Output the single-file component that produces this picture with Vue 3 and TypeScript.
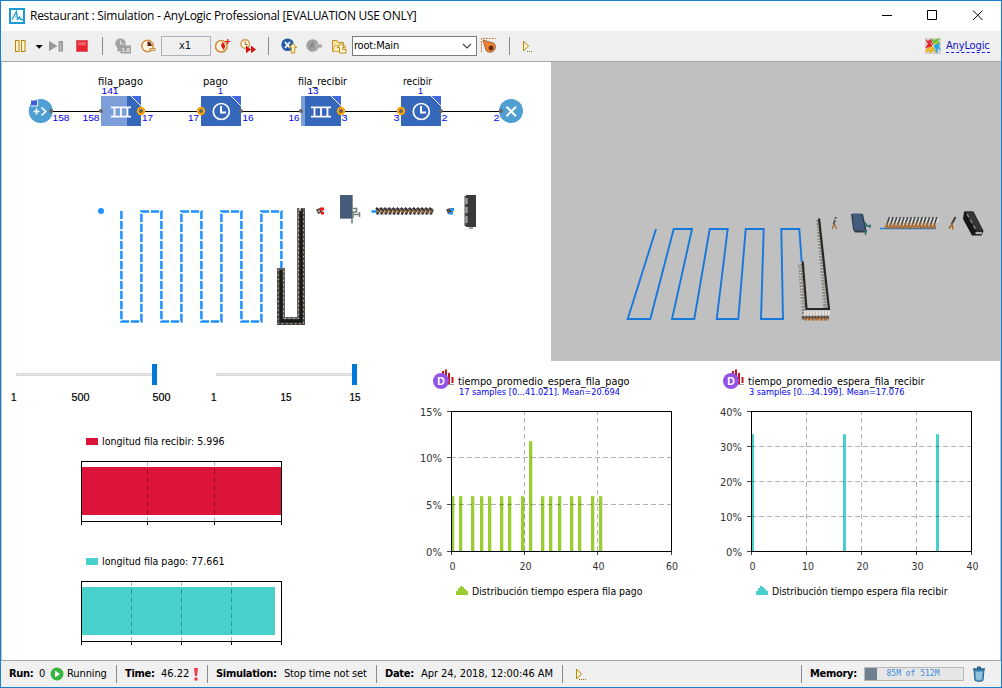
<script setup lang="ts">
interface Block { x: number; label: string; lx: number; lw: number; count: string; cx: number; cw: number; kind: 'queue' | 'delay'; fill: number }
interface Txt { x: number; y: number; w: number; t: string }

const blocks: Block[] = [
  { x: 101, label: 'fila_pago', lx: 98, lw: 45, count: '141', cx: 101.5, cw: 17, kind: 'queue', fill: 26 },
  { x: 201, label: 'pago', lx: 203, lw: 25, count: '1', cx: 218, cw: 5, kind: 'delay', fill: 0 },
  { x: 301, label: 'fila_recibir', lx: 298, lw: 49, count: '13', cx: 307.5, cw: 11, kind: 'queue', fill: 4 },
  { x: 401, label: 'recibir', lx: 403, lw: 29, count: '1', cx: 418, cw: 5, kind: 'delay', fill: 0 },
]
const portCounts: Txt[] = [
  { x: 52.5, y: 121, w: 17, t: '158' }, { x: 82.5, y: 121, w: 17, t: '158' },
  { x: 142, y: 121, w: 11, t: '17' }, { x: 188, y: 121, w: 11, t: '17' },
  { x: 242.5, y: 121, w: 11, t: '16' }, { x: 288.5, y: 121, w: 11, t: '16' },
  { x: 341.5, y: 121, w: 6, t: '3' }, { x: 393.5, y: 121, w: 6, t: '3' },
  { x: 441.5, y: 121, w: 6, t: '2' }, { x: 493.5, y: 121, w: 6, t: '2' },
]
const sliders = [
  { x: 16, labels: [{ x: 11, w: 5.5, t: '1' }, { x: 71.5, w: 18, t: '500' }, { x: 152.5, w: 18, t: '500' }] },
  { x: 216, labels: [{ x: 211, w: 5.5, t: '1' }, { x: 280.5, w: 11, t: '15' }, { x: 349.5, w: 11, t: '15' }] },
]
const levels = [
  { y: 461, color: '#dc143c', end: 281, ticks: [148, 215], label: 'longitud fila recibir: 5.996', w: 122.500 },
  { y: 581, color: '#48d1cc', end: 275, ticks: [132, 182, 232], label: 'longitud fila pago: 77.661', w: 122.500 },
]
interface Chart {
  x: number; hx: number; color: string; title: string; tw: number; info: string; iw: number; legend: string; lw: number
  gx: number[]; gy: number[]; xl: Txt[]; yl: Txt[]; bars: { x: number; y: number; w: number }[]
}
const low = [459, 471, 480, 488, 500, 508, 521, 541, 549, 558, 570, 578, 591, 599]
const charts: Chart[] = [
  {
    x: 451, hx: 451, color: '#9acd32', title: 'tiempo_promedio_espera_fila_pago', tw: 171.500,
    info: '17 samples [0...41.021]. Mean=20.694', iw: 161, legend: 'Distribución tiempo espera fila pago', lw: 170.500,
    gx: [524, 597], gy: [457, 504],
    xl: [{ x: 449.5, y: 570, w: 6, t: '0' }, { x: 519.5, y: 570, w: 12, t: '20' }, { x: 592.5, y: 570, w: 12, t: '40' }, { x: 666, y: 570, w: 12, t: '60' }],
    yl: [{ x: 420, y: 416, w: 22, t: '15%' }, { x: 420, y: 462, w: 22, t: '10%' }, { x: 426, y: 509, w: 16, t: '5%' }, { x: 426, y: 556, w: 16, t: '0%' }],
    bars: [{ x: 452, y: 496, w: 2 }, ...low.map(x => ({ x, y: 496, w: 3 })), { x: 529, y: 441, w: 3 }],
  },
  {
    x: 751, hx: 741, color: '#48d1cc', title: 'tiempo_promedio_espera_fila_recibir', tw: 176.500,
    info: '3 samples [0...34.199]. Mean=17.076', iw: 155.500, legend: 'Distribución tiempo espera fila recibir', lw: 175.500,
    gx: [806, 861, 916], gy: [446, 481, 516],
    xl: [{ x: 749.5, y: 570, w: 6, t: '0' }, { x: 802, y: 570, w: 12, t: '10' }, { x: 856.5, y: 570, w: 12, t: '20' }, { x: 911.5, y: 570, w: 12, t: '30' }, { x: 966.5, y: 570, w: 12, t: '40' }],
    yl: [{ x: 720, y: 416, w: 22, t: '40%' }, { x: 720, y: 451, w: 22, t: '30%' }, { x: 720, y: 486, w: 22, t: '20%' }, { x: 720, y: 521, w: 22, t: '10%' }, { x: 726, y: 556, w: 16, t: '0%' }],
    bars: [{ x: 752, y: 434, w: 2 }, { x: 843, y: 434, w: 3 }, { x: 936, y: 434, w: 3 }],
  },
]
const waiting = Array.from({ length: 14 }, (_, i) => i)
</script>

<template>
  <div class="window">
    <header class="titlebar">
      <svg class="app-icon" width="16" height="16" viewBox="0 0 16 16">
        <rect x="1" y="1" width="14" height="14" fill="#fff" stroke="#1c9ad6" stroke-width="2" />
        <path d="M3 11.5L7.500 3.500L8.500 11.500L10.500 9L11.500 11.500H14" fill="none" stroke="#1c9ad6" stroke-width="1.3" />
        <path d="M4 9.500L8 8.500" stroke="#7cc4e8" />
      </svg>
      <span class="title">Restaurant : Simulation - AnyLogic Professional [EVALUATION USE ONLY]</span>
      <svg class="win-buttons" width="104" height="12" viewBox="0 0 104 12">
        <path d="M0 5.5H10M45.5 0.5H54.5V9.5H45.5ZM91 0.5L100.5 10M100.5 0.5L91 10" fill="none" stroke="#000" />
      </svg>
    </header>

    <nav class="toolbar">
      <svg class="i" viewBox="0 0 16 16"><g fill="#fff2c4" stroke="#b8860b"><rect x="3.500" y="2.500" width="3.500" height="11" /><rect x="9.500" y="2.500" width="3.500" height="11" /></g></svg>
      <svg class="arrow" viewBox="0 0 8 16"><path d="M.5 7H7.800L4.200 10.800Z" fill="#000" /></svg>
      <svg class="i step" viewBox="0 0 16 16"><path d="M1 3L9.500 8L1 13Z" fill="#999" /><rect x="10.500" y="3" width="4.500" height="10.500" fill="#999" /><rect x="12" y="5" width="1.200" height="7" fill="#c4c4c4" /></svg>
      <svg class="i stop" viewBox="0 0 16 16"><rect x="2.500" y="2.500" width="11" height="11" fill="#e8212e" stroke="#e0606a" /><rect x="4" y="4" width="8" height="3.500" fill="#ef5d66" /></svg>
      <i class="sep"></i>
      <svg class="i g12" viewBox="0 0 16 16"><circle cx="5.500" cy="5.500" r="5.200" fill="#a4a4a4" /><path d="M5.500 2.500V6H8.500" fill="none" stroke="#e6e6e6" /><rect x="2.500" y="9.500" width="4" height="4" fill="#a4a4a4" /><rect x="5.500" y="7.500" width="10.500" height="8" fill="#a0a0a0" /><text x="6.500" y="14" class="mini">1.0</text></svg>
      <svg class="i g9" viewBox="0 0 16 16"><circle cx="7.500" cy="8" r="5.700" fill="#fff6df" stroke="#cf8a3c" stroke-width="1.500" /><path d="M7.500 8V3.600A4.400 4.400 0 0 1 11.900 8Z" fill="#5a2418" /><rect x="10" y="10.500" width="5" height="2" fill="#f7e3b7" stroke="#b8803a" stroke-width=".8" /></svg>
      <span class="speed">x1</span>
      <svg class="i g4" viewBox="0 0 16 16"><circle cx="6.300" cy="8.300" r="5.800" fill="#fff6df" stroke="#cf8a3c" stroke-width="1.500" /><path d="M6 7.500L7.500 4A5 5 0 0 1 8.500 12Z" fill="#e41414" /><path d="M12.700 1V6M10.200 3.500H15.200" stroke="#d81414" stroke-width="1.200" /></svg>
      <svg class="i g9" viewBox="0 0 16 16"><circle cx="5.200" cy="6" r="4.300" fill="#fff6df" stroke="#cf9a4c" stroke-width="1.400" /><path d="M5.200 3.500V6.500H7.500" fill="none" stroke="#a06a2c" /><path d="M6 7.500L11 11.400L6 15.300ZM11 7.500L16 11.400L11 15.300Z" fill="#d8100c" /></svg>
      <i class="sep"></i>
      <svg class="i g12" viewBox="0 0 16 16"><circle cx="6.600" cy="6.800" r="6.300" fill="#235ba8" /><path d="M4 4L9 10M9 4L4 10" stroke="#fff" stroke-width="1.800" /><path d="M12 5.500L15.800 9.500H13.700V15H10.300V9.500H8.200Z" fill="#ffeeb8" stroke="#b8860b" stroke-width=".9" /></svg>
      <svg class="i g9" viewBox="0 0 16 16"><circle cx="6.600" cy="7.500" r="6.300" fill="#a2a2a2" /><path d="M4 10.500L6.500 4.500L9 10.500M5 8.500H8" fill="none" stroke="#888" stroke-width="1.500" /><path d="M8.500 8L12 4.500V6.500H16V9.800H12V11.800Z" fill="#a8a8a8" stroke="#c9c9c9" stroke-width=".5" /></svg>
      <svg class="i g9" viewBox="0 0 16 16"><path d="M1.500 13.500V2.500H6L7 4.500H12.500V13.500Z" fill="#fbe3a0" stroke="#c08f2c" /><path d="M3.500 7.500H14.500V13.500H2Z" fill="#fcebb6" stroke="#cf9f42" stroke-width=".7" /><path d="M10 5.500L13.600 9.500H11.700V11.500H15V15H8.500V9.500H6.400Z" fill="#fff6d4" stroke="#b8860b" stroke-width=".9" /></svg>
      <span class="combo">root:Main<svg width="10" height="6" viewBox="0 0 10 6"><path d="M1 1L5 5L9 1" fill="none" stroke="#444" stroke-width="1.100" /></svg></span>
      <svg class="i g4" viewBox="0 0 16 16"><path d="M.5 14V.5H15" fill="none" stroke="#d87a36" stroke-dasharray="2 1" /><path d="M2 2L13 5.200A5.300 5.300 0 1 1 5 12.500Z" fill="#f08232" stroke="#8f552c" stroke-width=".8" /><circle cx="10" cy="10" r="2.400" fill="#5b2b12" /></svg>
      <i class="sep"></i>
      <svg class="i g10" viewBox="0 0 16 16"><path d="M3.500 3L8.500 8L3.500 13Z" fill="#fff4cf" stroke="#b8860b" /><path d="M7 13.500H13" stroke="#8a6a14" stroke-dasharray="1 1" /></svg>
      <svg class="i brand" viewBox="0 0 16 16"><rect width="16" height="16" fill="#d2d3d0" /><path d="M0 1L3 3L6 1L8 7L7 9L0 10L3 6Z" fill="#df2530" /><path d="M6 0L9 2L15 0L13 3L15 5L9 8Z" fill="#78bd35" /><path d="M8 8L15 5L14 8L16 13L13 10L12 16L10 12Z" fill="#22a7e0" /><path d="M0 15L2 10L8 8L11 15L7 12L6 16L4 13Z" fill="#f3ae13" /><path d="M5 4L11 12M12 4L4 12" stroke="#fff" stroke-width=".8" opacity=".7" /></svg>
      <span class="link">AnyLogic</span>
    </nav>

    <main class="workspace">
      <section class="views">
        <svg class="view" width="549" height="299" viewBox="2 62 549 299">
          <path d="M41 111H511" stroke="#000" shape-rendering="crispEdges" />
          <circle cx="40.700" cy="111" r="12" fill="#4f9fd3" />
          <path d="M31 100.500H37.500V106H31Z" fill="#3c62df" /><path d="M31 106H37.700V100" fill="none" stroke="#fff" />
          <path d="M33.500 111.500H39.500M36.500 108.500V114.500M41.500 107.500L45.700 111.500L41.500 115.500" fill="none" stroke="#fff" stroke-width="1.700" />
          <circle cx="511" cy="111" r="12" fill="#4f9fd3" />
          <path d="M506.500 106.700L516 116.200M516 106.700L506.500 116.200" stroke="#fff" stroke-width="2" />
          <g v-for="b in blocks" :key="b.x">
            <rect :x="b.x" y="96" width="40" height="30" fill="#3568ba" />
            <rect :x="b.x" y="96" :width="b.fill" height="30" fill="#7c9fda" />
            <path :d="`M${b.x + 30} 96H${b.x + 40}V106Z`" fill="#4169e1" />
            <path :d="`M${b.x + 30} 96L${b.x + 40} 106`" stroke="#fff" />
            <path v-if="b.kind === 'queue'" :d="`M${b.x + 10} 107.300H${b.x + 30}M${b.x + 10} 116.700H${b.x + 30}M${b.x + 13.500} 107V117M${b.x + 20} 107V117M${b.x + 26.500} 107V117`" fill="none" stroke="#fff" stroke-width="1.800" />
            <g v-else fill="none" stroke="#fff"><circle :cx="b.x + 20.300" cy="111.500" r="8" stroke-width="1.700" /><path :d="`M${b.x + 20} 106V112.500H${b.x + 25}`" stroke-width="2" /></g>
            <text class="tahoma" :x="b.lx" y="85" :textLength="b.lw" lengthAdjust="spacingAndGlyphs">{{ b.label }}</text>
            <text class="num" :x="b.cx" y="94" :textLength="b.cw" lengthAdjust="spacingAndGlyphs">{{ b.count }}</text>
          </g>
          <g fill="none" stroke="#ffa500" stroke-width="2.600"><circle v-for="x in [141, 201, 341, 401]" :key="x" :cx="x" cy="111" r="2.900" /></g>
          <g fill="#666"><circle v-for="x in [51, 101, 141, 201, 241, 301, 341, 401, 441, 501]" :key="x" :cx="x" cy="111" r="2" /></g>
          <text v-for="p in portCounts" :key="p.x" class="num" :x="p.x" :y="p.y" :textLength="p.w" lengthAdjust="spacingAndGlyphs">{{ p.t }}</text>

          <circle cx="101" cy="211" r="3" fill="#1e90ff" />
          <path d="M121.400 211V321.500H141.400V211.500H161.400V321.500H181.400V211.500H201.400V321.500H221.400V211.500H241.400V321.500H261.400V211.500H281.400V269" fill="none" stroke="#1e90ff" stroke-width="2.500" stroke-dasharray="8.200 1.800" />
          <g fill="none">
            <path d="M281 268V321H301V208" stroke="#65625d" stroke-width="8" />
            <path d="M281 270V321H301V209" stroke="#1b1a19" stroke-width="3.400" />
            <path d="M278 270V324H304V211" stroke="#3d3a36" stroke-width="1.400" />
            <path d="M278.300 270V323.600H303.600V212M283.600 271V318.500H298.600V210" stroke="#dcdcdc" stroke-width="1" stroke-dasharray="1.200 3.200" />
            <path d="M277.500 272V324H304.500V215" stroke="#8b6b45" stroke-width=".7" stroke-dasharray="1 6" />
          </g>
          <path d="M300 208V211" stroke="#fff" stroke-width="1.300" />
          <path d="M316 209.500L320 208L323 212L318 214Z" fill="#5b4c42" /><path d="M320 207.500H324V210.500H320ZM321 212H324V214.500H321Z" fill="#e11" /><circle cx="319" cy="211" r="1" fill="#c9b39c" />
          <rect x="340" y="195" width="12" height="23" fill="#455b79" /><path d="M340 218.500H351.500M352.500 195V218" stroke="#8a8f96" />
          <path d="M353 208.500H356.500V212H353V218M352 218V223.500M354 214.500H359M359.500 212V217" fill="none" stroke="#6d827d" stroke-width="1.600" />
          <path d="M371.500 211.500H377" stroke="#1e90ff" stroke-width="2.500" />
          <g v-for="i in waiting" :key="i"><path :d="`M${376 + i * 4.1} 208L${379 + i * 4.1} 210.500L${377 + i * 4.1} 214.500`" fill="none" stroke="#333" stroke-width="2.400" /><path :d="`M${376 + i * 4.1} 211.500H${379 + i * 4.1}`" stroke="#a66c33" stroke-width="1.700" /><path :d="`M${379.500 + i * 4.1} 208V209.500M${379 + i * 4.1} 213V214.500`" stroke="#999" /></g>
          <path d="M446 209.500L450 208L453 212L448 214Z" fill="#5b4c42" /><path d="M450.500 208H454V211H450.500ZM449 212H453V214.500H449Z" fill="#1e90ff" />
          <rect x="466" y="195" width="10" height="32" fill="#393939" /><path d="M465.500 196V226" stroke="#4f4f4f" stroke-width="2" /><path d="M466.500 198V204M466.500 207V213M466.500 216V223" stroke="#a0a0a0" stroke-width="2.300" /><rect x="469" y="227" width="4" height="2" fill="#a0a0a0" />
        </svg>
        <svg class="view scene" width="449" height="299" viewBox="551 62 449 299">
          <path d="M656 229L627.700 319H650.300L673.700 229H692L672 319H694.300L709.700 229H727.700L716.700 319H738.300L745.700 229H763.700L761 319H783L781.300 229H799.300L801.700 262" fill="none" stroke="#1778dc" stroke-width="1.900" />
          <g fill="none">
            <path d="M800 264L804 315M801.500 318L829 317M818 220L825.500 310" stroke="#8d8a86" stroke-width="4" stroke-dasharray="2 1" />
            <path d="M799.700 264L802.500 310M816.500 222L823.500 305" stroke="#e5e2db" stroke-width="1" stroke-dasharray="1 3" />
            <path d="M802.700 261.500L806.500 309H829L819 218.500" stroke="#292725" stroke-width="2.200" />
            <path d="M804 313H830" stroke="#e4e0d8" stroke-width="4.500" stroke-dasharray="2 1" />
            <path d="M802.500 317.500H829" stroke="#463628" stroke-width="2.500" stroke-dasharray="2 1" />
            <path d="M804 319.300H829" stroke="#b46b29" stroke-width="2.200" stroke-dasharray="3 1" />
          </g>
          <g fill="none"><path d="M836 217L833.500 224.500" stroke="#555" stroke-width="2" /><path d="M832 229L834.500 224L836.500 229" stroke="#a4672e" stroke-width="1.200" /><circle cx="835.500" cy="219.500" r=".8" fill="#eee" /></g>
          <path d="M851 214L853 229.500L855 232.500H867L863 214Z" fill="#303c4c" /><path d="M852.500 213.500H861.500L865 231L854 230Z" fill="#435b7c" />
          <path d="M865 222.500L867.500 226M865.500 226H871M865.500 230V235M870 224.500V228" fill="none" stroke="#24766c" stroke-width="1.400" />
          <path d="M880 228.500H935" stroke="#1c83e3" stroke-width="1.600" />
          <g v-for="i in waiting" :key="i" fill="none"><path :d="`M${889.500 + i * 3.650} 217L${887 + i * 3.650} 224`" stroke="#444" stroke-width="1.500" /><path :d="`M${891 + i * 3.650} 218L${889.500 + i * 3.650} 223`" stroke="#f4f1ea" stroke-width=".9" /><path :d="`M${885 + i * 3.650} 228.500L${887 + i * 3.650} 224L${888.200 + i * 3.650} 229`" stroke="#a66426" stroke-width="1.400" /></g>
          <path d="M955.500 217L951.500 224.500" stroke="#44403c" stroke-width="2" fill="none" /><path d="M949 228.500L952 224L953 229.500" fill="none" stroke="#a66426" stroke-width="1.500" />
          <path d="M964 211.500H973.500L983.500 231L981.500 235.500H972L963 219Z" fill="#161616" /><path d="M965 211.500H973L983 230.500H976Z" fill="#353535" /><path d="M967 214L976 230" stroke="#808080" stroke-width="1.500" stroke-dasharray="4 2.500" /><path d="M975.500 233H982" stroke="#aaa" stroke-width="2.300" />
        </svg>
      </section>

      <section class="stats">
        <svg class="panel" width="409" height="299" viewBox="2 361 409 299">
          <g v-for="s in sliders" :key="s.x">
            <rect :x="s.x + .5" y="373.500" width="138" height="2" fill="#e7eaea" stroke="#d6d6d6" />
            <rect :x="s.x + 136" y="364" width="5" height="21" fill="#0078d7" />
            <text v-for="l in s.labels" :key="l.x" class="tick" :x="l.x" y="401" :textLength="l.w" lengthAdjust="spacingAndGlyphs">{{ l.t }}</text>
          </g>
          <g v-for="l in levels" :key="l.y" shape-rendering="crispEdges">
            <rect x="86" :y="l.y - 23" width="12" height="7" :fill="l.color" />
            <text class="tahoma" x="102" :y="l.y - 16" :textLength="l.w" lengthAdjust="spacingAndGlyphs">{{ l.label }}</text>
            <rect x="82" :y="l.y + 6" :width="l.end - 82" height="48" :fill="l.color" />
            <path v-for="t in l.ticks" :key="t" :d="`M${t - .5} ${l.y}V${l.y + 60}`" stroke="#000" stroke-opacity=".3" stroke-dasharray="5 3" />
            <rect x="81.500" :y="l.y + .5" width="200" height="60" fill="none" stroke="#000" />
            <path v-for="t in [82, ...l.ticks, 282]" :key="t" :d="`M${t - .5} ${l.y + 60}V${l.y + 64}`" stroke="#000" />
          </g>
        </svg>
        <svg v-for="c in charts" :key="c.x" class="panel" :width="c.x === 451 ? 295 : 294" height="299" :viewBox="`${c.x === 451 ? 411 : 706} 361 ${c.x === 451 ? 295 : 294} 299`">
          <path :d="`M${c.hx - 8} 383V371M${c.hx - 5} 383V369.500M${c.hx - 2} 384V373M${c.hx + 1.500} 383V377`" stroke="#c41414" stroke-width="2" />
          <path :d="`M${c.hx - 4} 384.500H${c.hx + 3}`" stroke="#999" />
          <circle :cx="c.hx - 10" cy="381" r="8" fill="#9453e6" />
          <text class="badge" :x="c.hx - 13.700" y="385">D</text>
          <text class="tahoma" :x="c.hx + 7" y="385" :textLength="c.tw" lengthAdjust="spacingAndGlyphs">{{ c.title }}</text>
          <text class="tahoma info" :x="c.hx + 8" y="395" :textLength="c.iw" lengthAdjust="spacingAndGlyphs">{{ c.info }}</text>
          <g v-for="b in c.bars" :key="b.x" :fill="c.color">
            <rect v-if="c.x === 451" :x="b.x + b.w" :y="b.y" width="1" :height="551 - b.y" opacity=".3" />
            <rect :x="b.x" :y="b.y" :width="b.w" height="1" opacity=".8" />
            <rect :x="b.x" :y="b.y + 1" :width="b.w" :height="550 - b.y" />
          </g>
          <g fill="none" stroke="#000" stroke-opacity=".3" stroke-dasharray="5 3">
            <path v-for="x in c.gx" :key="x" :d="`M${x + .5} 551V412`" />
            <path v-for="y in c.gy" :key="y" :d="`M${c.x} ${y + .5}H${c.x + 220}`" />
          </g>
          <g stroke="#444">
            <path v-for="x in [c.x, ...c.gx, c.x + 220]" :key="x" :d="`M${x + .5} 551V555`" />
            <path v-for="y in [411, ...c.gy, 551]" :key="y" :d="`M${c.x - 4} ${y + .5}H${c.x}`" />
          </g>
          <rect :x="c.x + .5" y="411.500" width="220" height="140" fill="none" stroke="#000" />
          <text v-for="l in [...c.xl, ...c.yl]" :key="`${l.x}-${l.y}`" class="tahoma axis" :x="l.x" :y="l.y" :textLength="l.w" lengthAdjust="spacingAndGlyphs">{{ l.t }}</text>
          <path :d="`M${c.x + 5} 595V591H${c.x + 7}V588H${c.x + 9}V586H${c.x + 11}V587H${c.x + 13}V589H${c.x + 15}V591H${c.x + 17}V595Z`" :fill="c.color" />
          <text class="tahoma" :x="c.x + 21" y="595" :textLength="c.lw" lengthAdjust="spacingAndGlyphs">{{ c.legend }}</text>
        </svg>
      </section>
    </main>

    <footer class="status">
      <b class="run">Run:</b><span class="run-no">0</span>
      <svg class="running" width="14" height="14" viewBox="0 0 14 14"><circle cx="7" cy="7" r="6.500" fill="#35b53b" /><path d="M5 3.500L10 7L5 10.500Z" fill="#fff" /></svg>
      <span class="running-label">Running</span><i class="sep"></i>
      <b class="time">Time:</b><span class="time-value">46.22</span>
      <svg class="bang" width="6" height="14" viewBox="0 0 6 14"><path d="M1 1H5L4 9H2Z" fill="#f0394c" /><circle cx="3" cy="12" r="1.700" fill="#f0394c" /></svg><i class="sep"></i>
      <b class="sim">Simulation:</b><span class="sim-value">Stop time not set</span><i class="sep"></i>
      <b class="date">Date:</b><span class="date-value">Apr 24, 2018, 12:00:46 AM</span><i class="sep"></i>
      <svg class="i g10" viewBox="0 0 16 16"><path d="M3.500 3L8.500 8L3.500 13Z" fill="#fff4cf" stroke="#b8860b" /><path d="M6 13.500H13" stroke="#8a6a14" stroke-dasharray="1 1" /></svg>
      <i class="sep push"></i>
      <b class="mem">Memory:</b>
      <div class="meter"><span>85M of 512M</span></div>
      <svg class="trash" width="14" height="16" viewBox="0 0 14 16"><path d="M2 4H12L11 14.500Q7 16.500 3 14.500Z" fill="#5a9fc6" stroke="#22658e" /><path d="M5 6V13.500M7 6V14M9 6V13.500" stroke="#c9e6f2" /><path d="M1 3.200H13M5 1.300H9" stroke="#28698f" stroke-width="1.800" /></svg>
    </footer>
  </div>
</template>

<style>
body { background: #fff; overflow: hidden; }
</style>
<style scoped>
.window { box-sizing: border-box; width: 1002px; height: 688px; border: 1px solid #1a7fd0; background: #fff; display: flex; flex-direction: column; color: #000; font: 11px/14px "DejaVu Sans Condensed", "DejaVu Sans", sans-serif; font-stretch: condensed; white-space: nowrap; }
svg { display: block; flex: none; }
.titlebar { height: 30px; flex: none; display: flex; align-items: center; padding: 0 16px 0 8px; }
.app-icon { margin-top: -1px; }
.title { margin: 0 0 0 5px; font: 12px/16px "Open Sans", "Noto Sans", sans-serif; letter-spacing: -.27px; }
.win-buttons { margin: -1px -1px 0 auto; }
.toolbar { box-sizing: border-box; height: 31px; flex: none; background: #efefef; border-bottom: 1px solid #a6a6a6; display: flex; align-items: center; padding: 0 11px; }
.i { width: 16px; height: 16px; flex: none; }
.arrow { width: 8px; height: 16px; margin-left: 7px; }
.step { margin-left: 5px; }
.stop { margin-left: 10px; }
.g4 { margin-left: 4px; }
.g9 { margin-left: 9px; }
.g10 { margin-left: 10px; }
.g12 { margin-left: 12px; }
.mini { font: bold 6px "Liberation Sans", sans-serif; fill: #f2f2f2; }
.sep { width: 1px; height: 18px; margin-left: 12px; background: #8b8b8b; flex: none; }
.speed { box-sizing: border-box; width: 50px; height: 20px; margin-left: 5px; padding-right: 2px; border: 1px solid #adb2b8; text-align: center; line-height: 18px; color: #0c1424; flex: none; }
.combo { box-sizing: border-box; width: 125px; height: 20px; margin-left: 5px; padding: 0 4px 0 1px; border: 1px solid #7a7a7a; background: #fff; display: flex; align-items: center; justify-content: space-between; flex: none; letter-spacing: -.2px; }
.brand { margin-left: auto; }
.link { width: 44px; margin-left: 5px; color: #1414c8; border-bottom: 1px dashed #1414ff; line-height: 13px; letter-spacing: -.15px; }
.workspace { flex: 1; display: flex; flex-direction: column; border: solid #c0c0c0; border-width: 0 1px; }
.views, .stats { display: flex; height: 299px; }
.scene { background: #c0c0c0; }
.tahoma { font: 11px "DejaVu Sans Condensed", "DejaVu Sans", sans-serif; font-stretch: condensed; }
.info { font-size: 9px; fill: #0000f0; }
.axis { fill: #333; }
.num { font: 9.500px "Liberation Sans", sans-serif; fill: #0000f0; }
.tick { font: 10px "Liberation Sans", sans-serif; stroke: #000; stroke-width: .2px; }
.badge { font: bold 10.500px "Liberation Sans", sans-serif; fill: #fff; }
.status { box-sizing: border-box; height: 27px; flex: none; background: #f0f0f0; border-top: 1px solid #a6a6a6; display: flex; align-items: center; padding: 0 15px 0 8px; }
.status b, .status span { flex: none; }
.status b { letter-spacing: -.3px; }
.status .sep { margin-left: 0; }
.run { width: 30px; }
.run-no { width: 11px; }
.running-label { width: 49px; margin-left: 3px; letter-spacing: -.1px; }
.time { width: 36px; margin-left: 8px; }
.time-value { width: 32px; }
.bang { margin-right: 8px; }
.sim { width: 68px; margin-left: 8px; }
.sim-value { width: 92px; letter-spacing: -.17px; }
.date { width: 36px; margin-left: 8px; }
.date-value { width: 141px; letter-spacing: -.06px; }
.status .push { margin-left: auto; }
.mem { width: 54px; margin-left: 8px; }
.meter { box-sizing: border-box; width: 100px; height: 14px; border: 1px solid #b9b9b9; background: linear-gradient(90deg, #708090 12px, #e6e6e6 12px); color: #3c8cdc; font: 8px/11px "DejaVu Sans Mono", monospace; text-align: center; padding-right: 2px; flex: none; }
.trash { margin-left: 8px; }
</style>
